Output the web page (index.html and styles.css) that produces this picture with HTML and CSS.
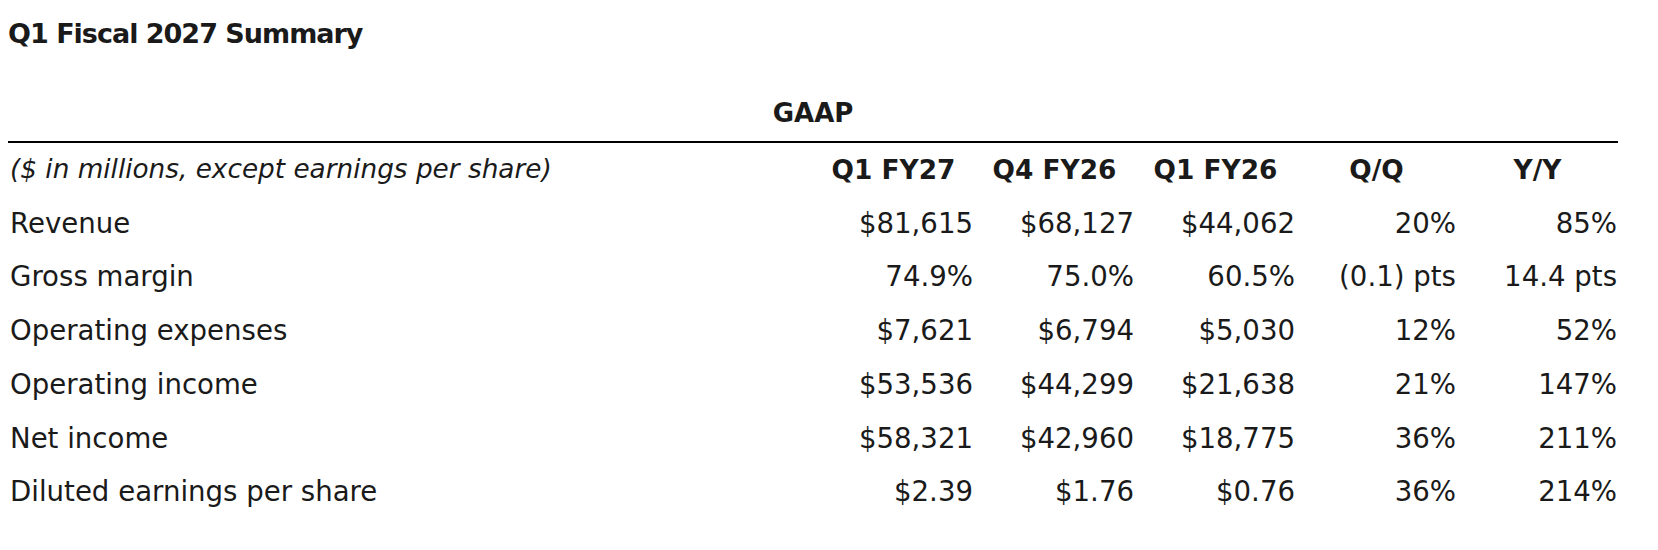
FILE: index.html
```html
<!DOCTYPE html>
<html lang="en">
<head>
<meta charset="utf-8">
<title>Q1 Fiscal 2027 Summary</title>
<link rel="stylesheet" href="styles.css">
</head>
<body>
<main class="page">
  <h2 class="title">Q1 Fiscal 2027 Summary</h2>
  <table class="summary">
    <colgroup>
      <col class="col-label">
      <col class="col-num"><col class="col-num"><col class="col-num"><col class="col-num"><col class="col-num">
    </colgroup>
    <thead>
      <tr class="group-row">
        <th colspan="6" class="group">GAAP</th>
      </tr>
      <tr class="head-row">
        <th class="label note">($ in millions, except earnings per share)</th>
        <th class="hnum">Q1 FY27</th>
        <th class="hnum">Q4 FY26</th>
        <th class="hnum">Q1 FY26</th>
        <th class="hnum">Q/Q</th>
        <th class="hnum">Y/Y</th>
      </tr>
    </thead>
    <tbody>
      <tr><td class="label">Revenue</td><td class="num">$81,615</td><td class="num">$68,127</td><td class="num">$44,062</td><td class="num">20%</td><td class="num">85%</td></tr>
      <tr><td class="label">Gross margin</td><td class="num">74.9%</td><td class="num">75.0%</td><td class="num">60.5%</td><td class="num">(0.1) pts</td><td class="num">14.4 pts</td></tr>
      <tr><td class="label">Operating expenses</td><td class="num">$7,621</td><td class="num">$6,794</td><td class="num">$5,030</td><td class="num">12%</td><td class="num">52%</td></tr>
      <tr><td class="label">Operating income</td><td class="num">$53,536</td><td class="num">$44,299</td><td class="num">$21,638</td><td class="num">21%</td><td class="num">147%</td></tr>
      <tr><td class="label">Net income</td><td class="num">$58,321</td><td class="num">$42,960</td><td class="num">$18,775</td><td class="num">36%</td><td class="num">211%</td></tr>
      <tr><td class="label">Diluted earnings per share</td><td class="num">$2.39</td><td class="num">$1.76</td><td class="num">$0.76</td><td class="num">36%</td><td class="num">214%</td></tr>
    </tbody>
  </table>
</main>
</body>
</html>
```

FILE: styles.css
```css
html, body {
  margin: 0;
  padding: 0;
  background: #ffffff;
}

body {
  font-family: "DejaVu Sans", "Liberation Sans", sans-serif;
  color: #1a1a1a;
}

.page {
  padding: 16px 8px 0 8px;
}

.title {
  margin: 0;
  font-size: 27px;
  font-weight: bold;
  letter-spacing: -1px;
  line-height: 36px;
  color: #1a1a1a;
}

.summary {
  margin-top: 35px;
  width: 1610px;
  border-collapse: collapse;
  table-layout: fixed;
}

.col-label { width: 805px; }
.col-num { width: 161px; }

.summary th,
.summary td {
  padding: 10px 0;
  line-height: 33.75px;
  font-size: 27.6px;
  white-space: nowrap;
}

.group-row {
  border-bottom: 2px solid #000;
}

.group {
  text-align: center;
  font-weight: bold;
  font-size: 26px !important;
}

.hnum {
  text-align: center;
  font-weight: bold;
  font-size: 26.4px !important;
}

.label {
  text-align: left;
  font-weight: normal;
  padding-left: 2px !important;
}

.note {
  font-style: italic;
  font-size: 26.3px !important;
}

.num {
  text-align: right;
  padding-right: 1px !important;
}
```
